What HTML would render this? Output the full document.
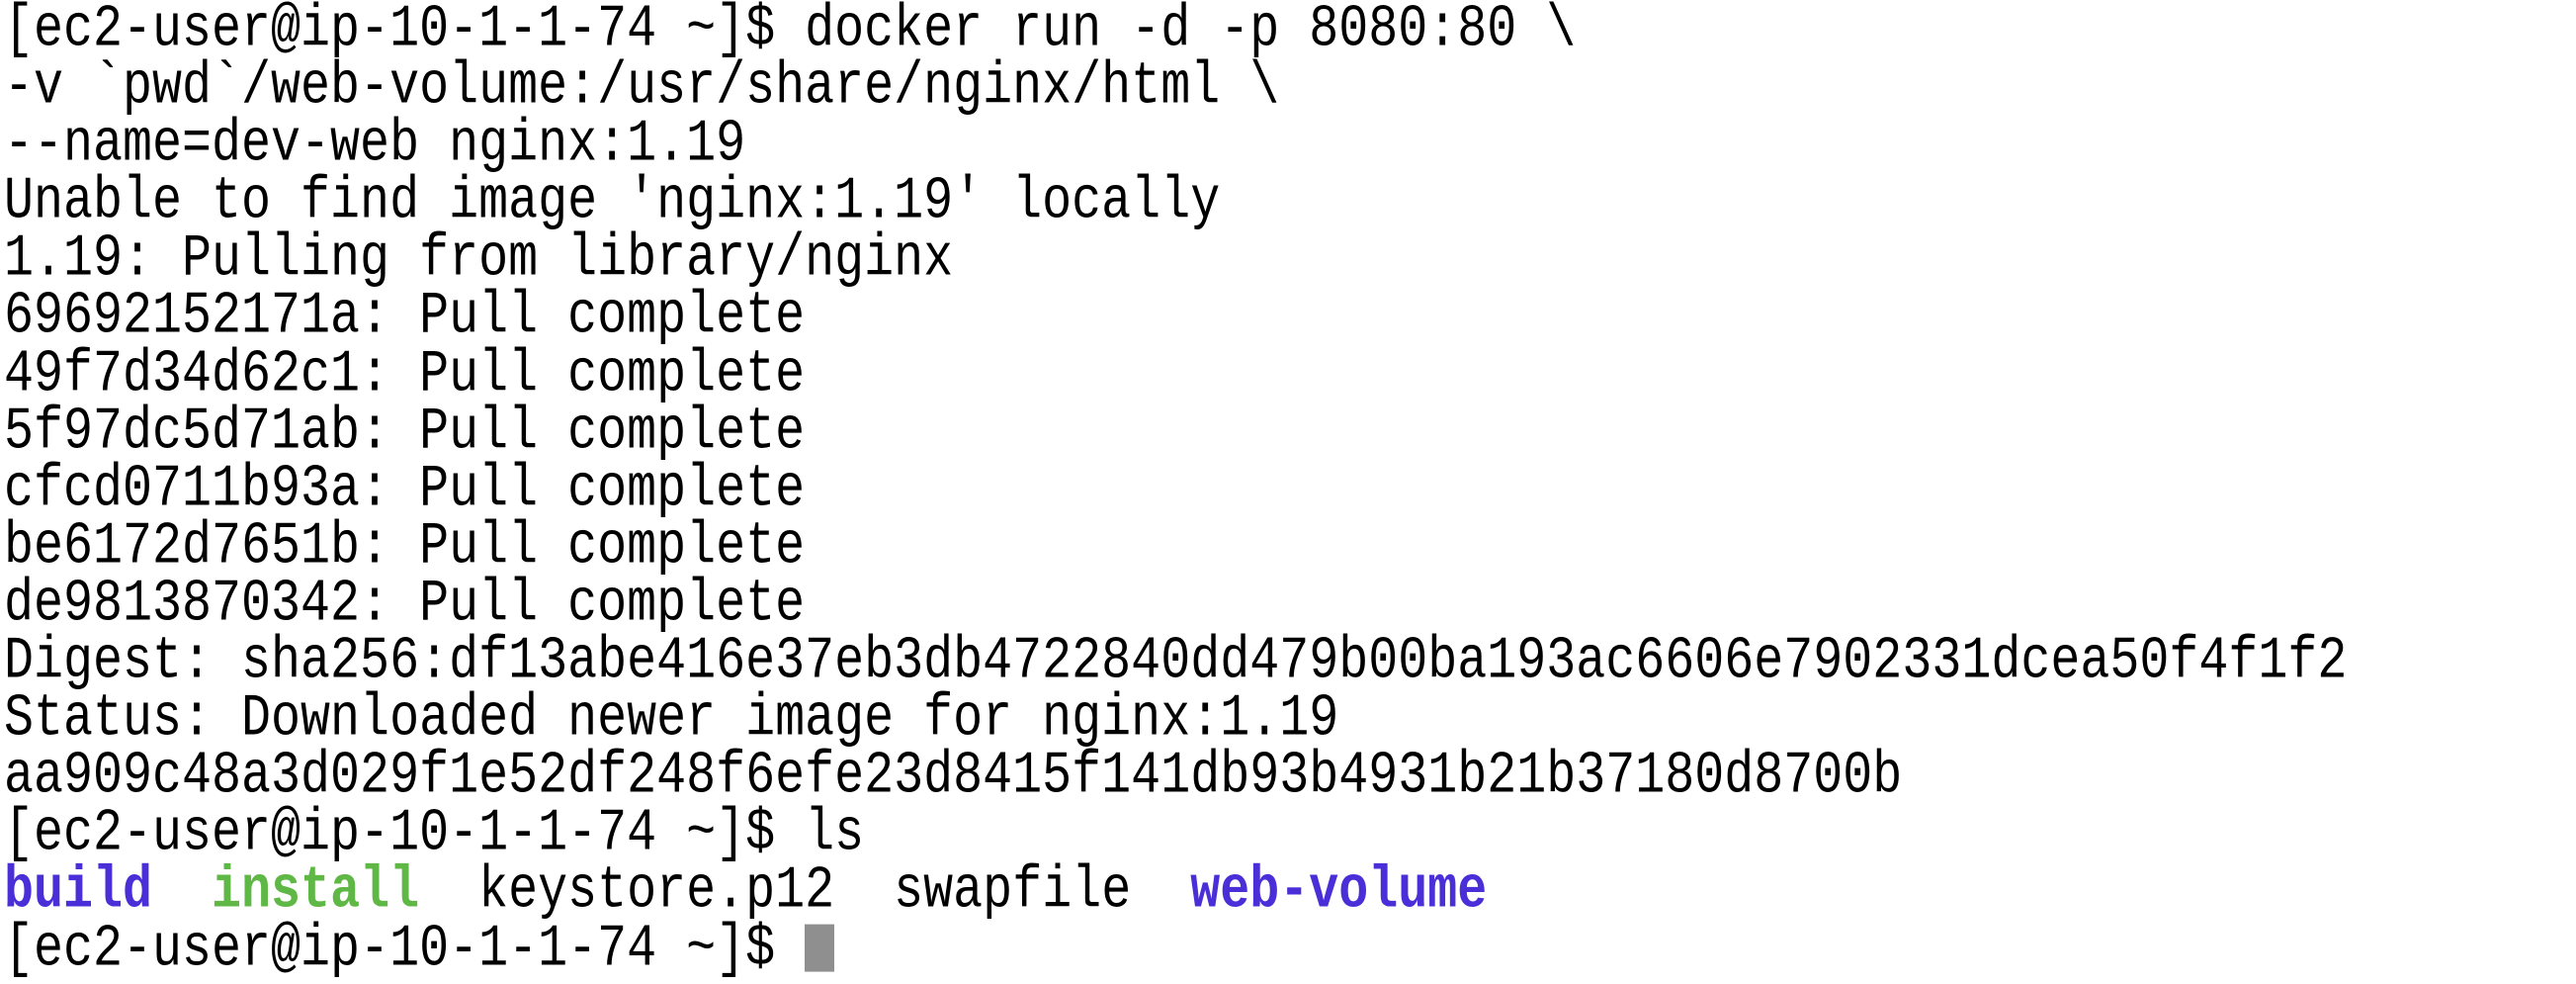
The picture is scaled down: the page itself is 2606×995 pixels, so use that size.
<!DOCTYPE html>
<html><head><meta charset="utf-8"><style>
html,body{margin:0;padding:0;background:#fff;width:2606px;height:942px;overflow:hidden}
#t{position:absolute;left:4px;top:2px;font-family:"Liberation Mono","DejaVu Sans Mono",monospace;font-size:50px;line-height:58.1px;color:#000;letter-spacing:0}
#t div{white-space:pre;height:58.1px;transform:scaleY(1.2);transform-origin:0 29px}
.b{color:#4a2fd8;font-weight:bold}
.g{color:#5fb845;font-weight:bold}
.cur{display:inline-block;width:30px;height:40px;background:#8f8f8f;vertical-align:-6px}
</style></head><body>
<div id="t"><div>[ec2-user@ip-10-1-1-74 ~]$ docker run -d -p 8080:80 \</div><div>-v `pwd`/web-volume:/usr/share/nginx/html \</div><div>--name=dev-web nginx:1.19</div><div>Unable to find image 'nginx:1.19' locally</div><div>1.19: Pulling from library/nginx</div><div>69692152171a: Pull complete</div><div>49f7d34d62c1: Pull complete</div><div>5f97dc5d71ab: Pull complete</div><div>cfcd0711b93a: Pull complete</div><div>be6172d7651b: Pull complete</div><div>de9813870342: Pull complete</div><div>Digest: sha256:df13abe416e37eb3db4722840dd479b00ba193ac6606e7902331dcea50f4f1f2</div><div>Status: Downloaded newer image for nginx:1.19</div><div>aa909c48a3d029f1e52df248f6efe23d8415f141db93b4931b21b37180d8700b</div><div>[ec2-user@ip-10-1-1-74 ~]$ ls</div><div><span class="b">build</span>  <span class="g">install</span>  keystore.p12  swapfile  <span class="b">web-volume</span></div><div>[ec2-user@ip-10-1-1-74 ~]$ <span class="cur"></span></div></div>
</body></html>
